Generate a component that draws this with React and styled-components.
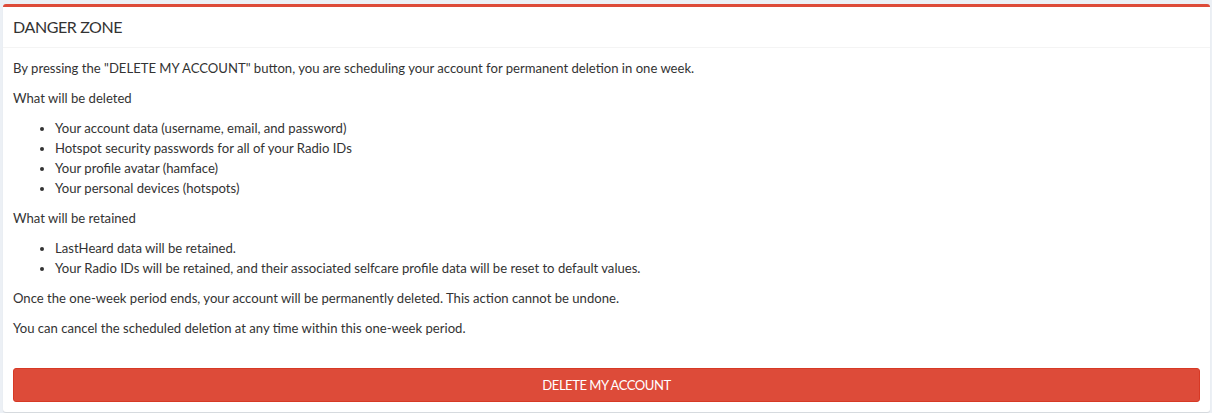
import React from 'react';
import styled, { createGlobalStyle } from 'styled-components';

const GlobalStyle = createGlobalStyle`
  * { box-sizing: border-box; }
  body {
    margin: 0;
    background: #ecf0f5;
    font-family: Lato, "Liberation Sans", sans-serif;
    font-size: 13.1px;
    line-height: 20px;
    color: #333;
  }
`;

const Page = styled.div`
  padding: 4px 2px 3px 3px;
`;

const Box = styled.div`
  background: #fff;
  border-top: 3px solid #dd4b39;
  border-radius: 3px;
  box-shadow: 0 1px 1px rgba(0, 0, 0, 0.1);
`;

const BoxHeader = styled.div`
  padding: 10px;
  border-bottom: 1px solid #f4f4f4;
`;

const BoxTitle = styled.h3`
  margin: 0;
  font-size: 16px;
  font-weight: 400;
  line-height: 20px;
  letter-spacing: -0.4px;
`;

const BoxBody = styled.div`
  padding: 10px;
`;

const Para = styled.p`
  margin: 0 0 10px;
`;

const List = styled.ul`
  margin: 0 0 10px;
  padding-left: 42px;
`;

const DangerButton = styled.button`
  display: block;
  width: 100%;
  margin-top: 30px;
  padding: 6px 12px;
  font: inherit;
  letter-spacing: -0.5px;
  color: #fff;
  background: #dd4b39;
  border: 1px solid #d73925;
  border-radius: 3px;
  cursor: pointer;
`;

const deleted = [
  'Your account data (username, email, and password)',
  'Hotspot security passwords for all of your Radio IDs',
  'Your profile avatar (hamface)',
  'Your personal devices (hotspots)',
];

const retained = [
  'LastHeard data will be retained.',
  'Your Radio IDs will be retained, and their associated selfcare profile data will be reset to default values.',
];

export default function App() {
  return (
    <Page>
      <GlobalStyle />
      <Box>
        <BoxHeader>
          <BoxTitle>DANGER ZONE</BoxTitle>
        </BoxHeader>
        <BoxBody>
          <Para>
            By pressing the "DELETE MY ACCOUNT" button, you are scheduling your account for permanent deletion in one week.
          </Para>
          <Para>What will be deleted</Para>
          <List>
            {deleted.map(item => <li key={item}>{item}</li>)}
          </List>
          <Para>What will be retained</Para>
          <List>
            {retained.map(item => <li key={item}>{item}</li>)}
          </List>
          <Para>
            Once the one-week period ends, your account will be permanently deleted. This action cannot be undone.
          </Para>
          <Para>You can cancel the scheduled deletion at any time within this one-week period.</Para>
          <DangerButton>DELETE MY ACCOUNT</DangerButton>
        </BoxBody>
      </Box>
    </Page>
  );
}
